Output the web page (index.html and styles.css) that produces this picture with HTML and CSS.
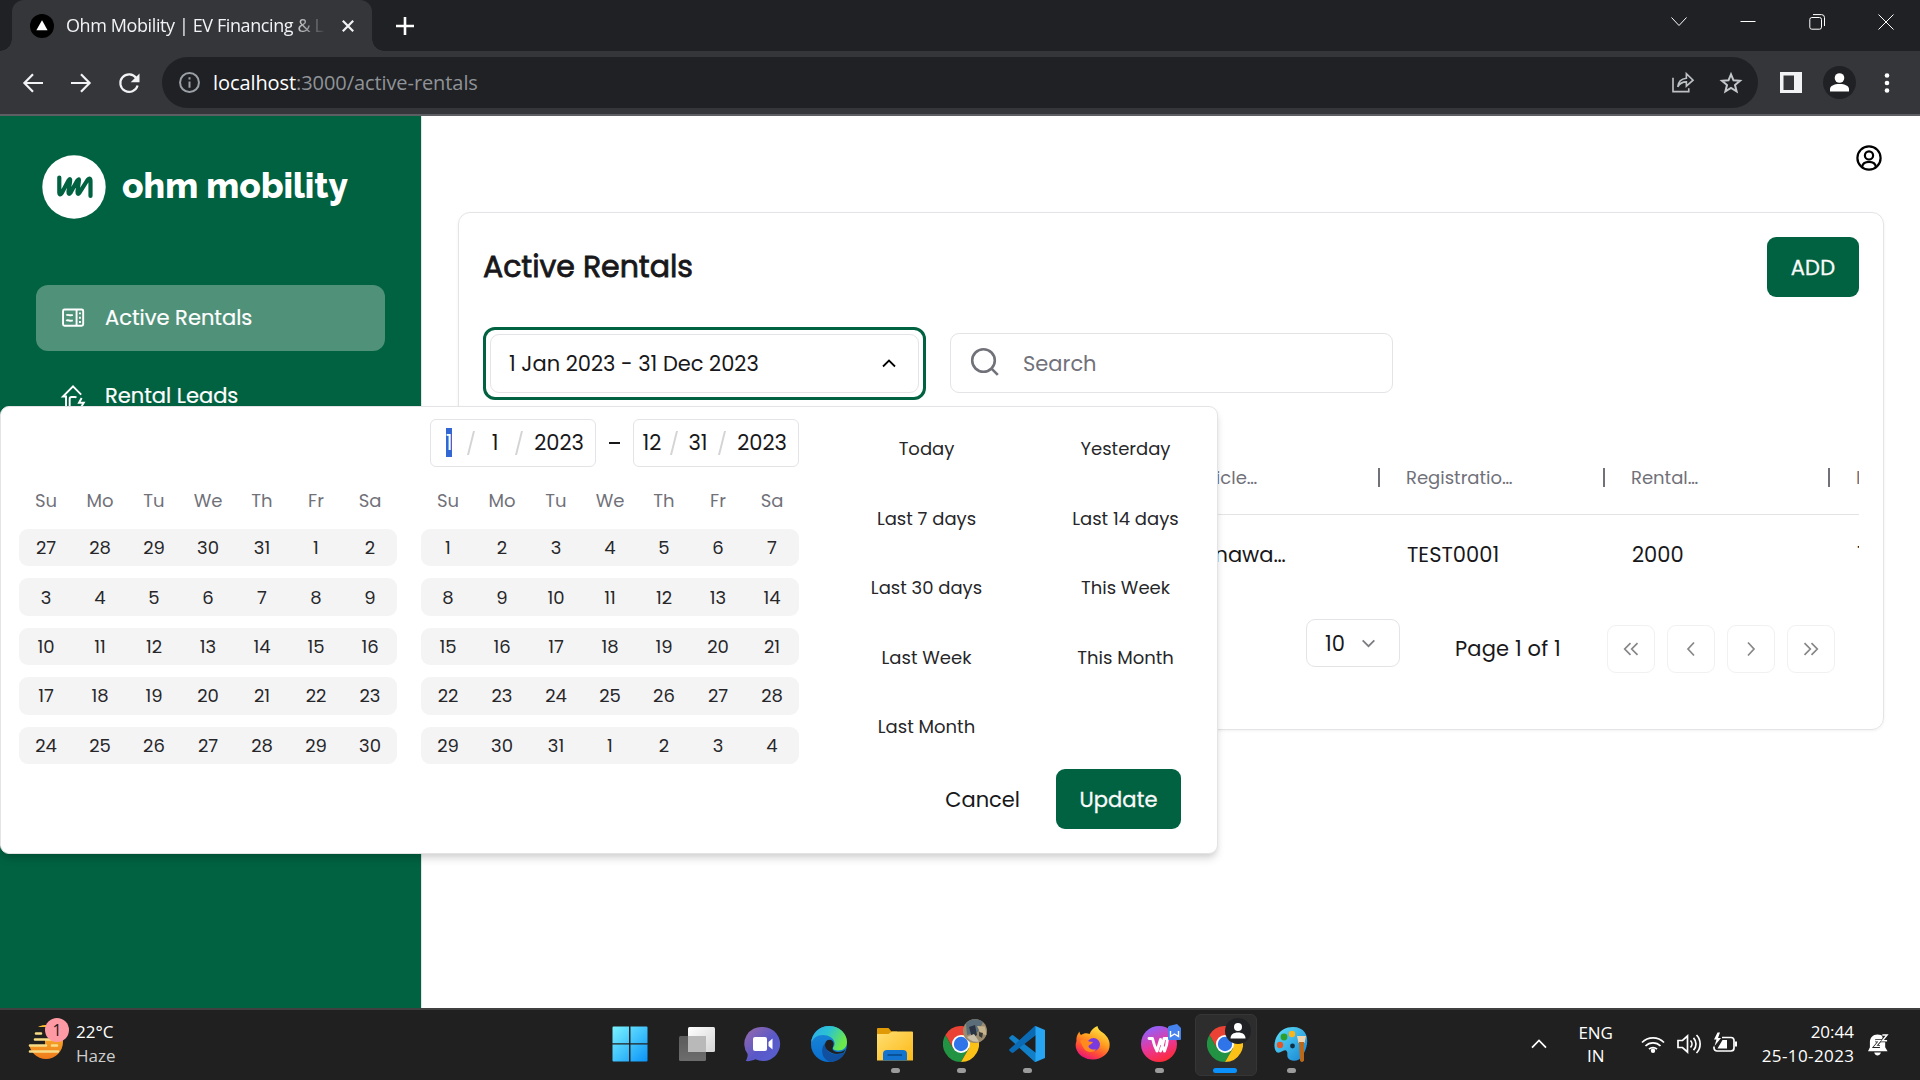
FILE: index.html
```html
<!DOCTYPE html>
<html lang="en">
<head>
<meta charset="utf-8">
<title>Ohm Mobility | EV Financing &amp; Leasing</title>
<link rel="stylesheet" href="styles.css">
</head>
<body>
<svg class="defs" width="0" height="0">
  <defs>
    <linearGradient id="win" x1="0" y1="0" x2="1" y2="1"><stop offset="0" stop-color="#7af3ff"/><stop offset="1" stop-color="#0a94f8"/></linearGradient>
    <linearGradient id="tvF" x1="0" y1="0" x2="1" y2="1"><stop offset="0" stop-color="#fff"/><stop offset="1" stop-color="#d4d4d4"/></linearGradient>
    <linearGradient id="tvB" x1="0" y1="0" x2="0" y2="1"><stop offset="0" stop-color="#5b5b5b"/><stop offset="1" stop-color="#6d6d6d"/></linearGradient>
    <linearGradient id="chat" x1="0" y1="0" x2="1" y2="1"><stop offset="0" stop-color="#9a6aa8"/><stop offset=".55" stop-color="#5a58c8"/><stop offset="1" stop-color="#5660d0"/></linearGradient>
    <linearGradient id="edgeA" x1="0" y1="0" x2="1" y2=".4"><stop offset="0" stop-color="#2fa9ee"/><stop offset=".5" stop-color="#2bc3d2"/><stop offset="1" stop-color="#6be84b"/></linearGradient>
    <linearGradient id="edgeB" x1="0" y1="0" x2="0" y2="1"><stop offset="0" stop-color="#1b8ad8"/><stop offset="1" stop-color="#0a6fd0"/></linearGradient>
    <linearGradient id="fold" x1="0" y1="0" x2="1" y2="1"><stop offset="0" stop-color="#ffdf73"/><stop offset="1" stop-color="#fdb916"/></linearGradient>
    <linearGradient id="ff" x1=".8" y1="0" x2=".3" y2="1"><stop offset="0" stop-color="#fff04a"/><stop offset=".45" stop-color="#ff9a1f"/><stop offset=".75" stop-color="#ff4a37"/><stop offset="1" stop-color="#e8127f"/></linearGradient>
    <linearGradient id="wps" x1=".3" y1="0" x2=".7" y2="1"><stop offset="0" stop-color="#8b63ff"/><stop offset=".5" stop-color="#e6389f"/><stop offset="1" stop-color="#ff2a2f"/></linearGradient>
    <linearGradient id="pal" x1="0" y1="0" x2="1" y2="1"><stop offset="0" stop-color="#5fe0fb"/><stop offset="1" stop-color="#1583d3"/></linearGradient>
    <linearGradient id="sun" x1="0" y1="0" x2="0" y2="1"><stop offset="0" stop-color="#fbc02e"/><stop offset="1" stop-color="#ee7a1c"/></linearGradient>
    <symbol id="chrome" viewBox="0 0 36 36">
      <path d="M2.4 9A18 18 0 0 1 33.6 9H18L10.2 22.5z" fill="#ea4335"/>
      <path d="M2.4 9A18 18 0 0 0 18 36L25.8 22.5H10.2z" fill="#229342"/>
      <path d="M33.6 9A18 18 0 0 1 18 36L25.8 22.5 18 9z" fill="#fbc116"/>
      <circle cx="18" cy="18" r="9" fill="#fff"/><circle cx="18" cy="18" r="7.2" fill="#2f74e8"/>
    </symbol>
  </defs>
</svg>

<header class="browser">
  <div class="tabstrip">
    <div class="tab">
      <svg class="favicon" viewBox="0 0 24 24"><circle cx="12" cy="12" r="12"/><path d="M12 6.3l5.600 10H6.400z" fill="#fff"/></svg>
      <span class="tab-title">Ohm Mobility | EV Financing &amp; L</span>
      <svg class="tab-close" viewBox="0 0 12 12"><path d="M.8.8l10.400 10.400M11.200.8L.8 11.200"/></svg>
    </div>
    <svg class="newtab" viewBox="0 0 18 18"><path d="M9 0v18M0 9h18"/></svg>
    <div class="win-controls">
      <svg viewBox="0 0 16 16"><path d="M.5 3.500L8 11.500 15.500 3.500"/></svg>
      <svg viewBox="0 0 16 16"><path d="M.5 7.500h15"/></svg>
      <svg viewBox="0 0 16 16"><rect x=".8" y="3.500" width="11.700" height="11.700" rx="2"/><path d="M4 .6h8.500a3 3 0 0 1 3 3V12"/></svg>
      <svg viewBox="0 0 16 16"><path d="M.5.5l15 15M15.500.5l-15 15"/></svg>
    </div>
  </div>
  <div class="toolbar">
    <svg class="tb-ico back" viewBox="0 0 20 20"><path d="M20 10H1.500M10 1.200L1.400 10l8.600 8.800"/></svg>
    <svg class="tb-ico fwd" viewBox="0 0 20 20"><path d="M0 10h18.500M10 1.200L18.600 10 10 18.800"/></svg>
    <svg class="tb-ico reload" viewBox="0 0 20 20"><path d="M17.300 5A8.800 8.800 0 1 0 18.600 12.500"/><path d="M20.500.5v8.800h-8.800z" fill="#f1f3f4" stroke="none"/></svg>
    <div class="omnibox">
      <svg class="info" viewBox="0 0 20 20"><circle cx="10" cy="10" r="9"/><path d="M10 9v6M10 5v2.200"/></svg>
      <span class="url"><b>localhost</b>:3000/active-rentals</span>
      <svg class="share" viewBox="0 0 24 22"><path d="M1 6v14.500h16.500V17M6 15.500C6.500 10 10 7 15 6.500V1.800l7 6.700-7 6.300v-4.500c-4 0-7 1.500-9 5.200z"/></svg>
      <svg class="star" viewBox="0 0 22 22"><path d="M11 2.300l2.500 6 6.500.5-5 4.200 1.600 6.300L11 15.900l-5.600 3.400L7 13 2 8.800l6.500-.5z"/></svg>
    </div>
    <svg class="panel-ico" viewBox="0 0 22 21"><path fill-rule="evenodd" fill="#f1f3f4" d="M0 0h22v21H0zM3.500 3.500v14.500H14V3.500z"/></svg>
    <svg class="profile" viewBox="0 0 33 33"><circle cx="16.500" cy="16.500" r="16.500" fill="#202124"/><circle cx="16.500" cy="12" r="4.800" fill="#fff"/><path d="M7 25.500v-2.500c0-3 4-5 9.500-5s9.500 2 9.500 5v2.500z" fill="#fff"/></svg>
    <svg class="kebab" viewBox="0 0 6 20"><circle cx="3" cy="2.500" r="2.300"/><circle cx="3" cy="10" r="2.300"/><circle cx="3" cy="17.500" r="2.300"/></svg>
  </div>
</header>

<div class="app">
  <aside class="sidebar">
    <div class="brand">
      <svg viewBox="0 0 64 64"><circle cx="32" cy="32" r="31.700" fill="#fff"/><path d="M17.300 22.500V37.500q.3 3.500 2.500.5L26.500 25.500q2.300-3 1.600 1L26.500 36.500q-.2 4 2 1.200L35 26q2.500-3.500 1.800.5L35.500 36.500q-.2 4 2 1.200L45.500 25q3-3 3 1v15" fill="none" stroke="#006241" stroke-width="4.200" stroke-linecap="round" stroke-linejoin="round"/></svg>
      <span class="brand-name">ohm mobility</span>
    </div>
    <nav class="nav">
      <a class="nav-item active">
        <svg viewBox="0 0 24 20"><rect x="1.100" y="1.100" width="21" height="17" rx="1.500"/><path d="M15.200 1v17M4.500 7.300c2-1.800 3.500 1 6.800-.5M4.500 13c2-1.800 3.500 1 6.800-.5"/><path d="M18.700 4.200v2M18.700 8.700v2M18.700 13.200v2"/></svg>
        <span>Active Rentals</span>
      </a>
      <a class="nav-item">
        <svg class="house" viewBox="0 0 24 24"><path d="M20 10.500L11.500 2 1 12.500h3.200V22a2 2 0 0 0 2 2h6M8 23v-8a2 2 0 0 1 2-2h3.500a2 2 0 0 1 1.500.7M20.500 14l-2.800 5h5L20 23.500"/></svg>
        <span>Rental Leads</span>
      </a>
    </nav>
  </aside>

  <main class="main">
    <div class="topbar">
      <svg viewBox="0 0 26 26"><circle cx="13" cy="13" r="11.600"/><circle cx="13" cy="10.400" r="4.100"/><path d="M6 22c.6-4 3-5.200 7-5.200s6.400 1.200 7 5.200"/></svg>
    </div>
    <section class="card">
      <div class="card-head">
        <h1>Active Rentals</h1>
        <button class="btn-primary add">ADD</button>
      </div>
      <div class="filters">
        <div class="date-select">
          <span>1 Jan 2023 - 31 Dec 2023</span>
          <svg viewBox="0 0 14 9"><path d="M1 7.500L7 1.500l6 6"/></svg>
        </div>
        <div class="search">
          <svg viewBox="0 0 30 30"><circle cx="13.500" cy="13.500" r="11.300"/><path d="M21.800 21.800l6 6"/></svg>
          <span>Search</span>
        </div>
      </div>
      <div class="table">
        <div class="tr th">
          <div></div><div></div><div></div>
          <div><span>Vehicle…</span></div>
          <div><span>Registratio…</span></div>
          <div><span>Rental…</span></div>
          <div><span>I</span></div>
        </div>
        <div class="tr td">
          <div></div><div></div><div></div>
          <div>Okinawa…</div>
          <div>TEST0001</div>
          <div>2000</div>
          <div>1</div>
        </div>
      </div>
      <div class="pager">
        <div class="page-size"><span>10</span><svg viewBox="0 0 16 10"><path d="M1.500 1.500L8 8l6.500-6.500"/></svg></div>
        <span class="page-of">Page 1 of 1</span>
        <div class="pg"><svg viewBox="0 0 18 18"><path d="M8.500 3.200L2.700 9l5.800 5.800M15.500 3.200L9.700 9l5.800 5.800"/></svg></div>
        <div class="pg"><svg viewBox="0 0 18 18"><path d="M12 2.500L6 9l6 6.500"/></svg></div>
        <div class="pg"><svg viewBox="0 0 18 18"><path d="M6 2.500L12 9l-6 6.500"/></svg></div>
        <div class="pg"><svg viewBox="0 0 18 18"><path d="M2.500 3.200L8.300 9l-5.800 5.800M9.500 3.200L15.300 9l-5.800 5.800"/></svg></div>
      </div>
    </section>
  </main>

  <div class="popover">
    <div class="cal-side">
      <div class="date-inputs">
        <div class="date-box"><span class="mm"><mark>1</mark></span><i></i><span class="dd">1</span><i></i><span class="yy">2023</span></div>
        <span class="dash"></span>
        <div class="date-box"><span class="mm">12</span><i></i><span class="dd">31</span><i></i><span class="yy">2023</span></div>
      </div>
      <div class="calendars">
        <div class="cal">
          <div class="week head"><span>Su</span><span>Mo</span><span>Tu</span><span>We</span><span>Th</span><span>Fr</span><span>Sa</span></div>
          <div class="week"><span>27</span><span>28</span><span>29</span><span>30</span><span>31</span><span>1</span><span>2</span></div>
          <div class="week"><span>3</span><span>4</span><span>5</span><span>6</span><span>7</span><span>8</span><span>9</span></div>
          <div class="week"><span>10</span><span>11</span><span>12</span><span>13</span><span>14</span><span>15</span><span>16</span></div>
          <div class="week"><span>17</span><span>18</span><span>19</span><span>20</span><span>21</span><span>22</span><span>23</span></div>
          <div class="week"><span>24</span><span>25</span><span>26</span><span>27</span><span>28</span><span>29</span><span>30</span></div>
        </div>
        <div class="cal">
          <div class="week head"><span>Su</span><span>Mo</span><span>Tu</span><span>We</span><span>Th</span><span>Fr</span><span>Sa</span></div>
          <div class="week"><span>1</span><span>2</span><span>3</span><span>4</span><span>5</span><span>6</span><span>7</span></div>
          <div class="week"><span>8</span><span>9</span><span>10</span><span>11</span><span>12</span><span>13</span><span>14</span></div>
          <div class="week"><span>15</span><span>16</span><span>17</span><span>18</span><span>19</span><span>20</span><span>21</span></div>
          <div class="week"><span>22</span><span>23</span><span>24</span><span>25</span><span>26</span><span>27</span><span>28</span></div>
          <div class="week"><span>29</span><span>30</span><span>31</span><span>1</span><span>2</span><span>3</span><span>4</span></div>
        </div>
      </div>
    </div>
    <div class="preset-side">
      <div class="presets">
        <span>Today</span><span>Yesterday</span>
        <span>Last 7 days</span><span>Last 14 days</span>
        <span>Last 30 days</span><span>This Week</span>
        <span>Last Week</span><span>This Month</span>
        <span>Last Month</span>
      </div>
      <div class="actions">
        <button class="btn-ghost">Cancel</button>
        <button class="btn-primary update">Update</button>
      </div>
    </div>
  </div>
</div>

<footer class="taskbar">
  <div class="weather">
    <div class="w-ico">
      <svg viewBox="0 0 36 36"><circle cx="18" cy="15" r="17" fill="url(#sun)"/><path d="M0 0h36v12H17v6H0z" fill="#202020"/><path d="M8 6.500h5M7 12.500h16M2 18.500h16M24 18.500h5M2 24.500h28" stroke="#f7dc87" stroke-width="2.600" stroke-linecap="round"/></svg>
      <span class="badge">1</span>
    </div>
    <div class="w-text"><span>22°C</span><span class="dim">Haze</span></div>
  </div>
  <div class="tasks">
    <div class="task start"><svg viewBox="0 0 36 36"><path fill="url(#win)" d="M1.500.5H17v16.700H.5V1.500a1 1 0 0 1 1-1zM18.500.5h16a1 1 0 0 1 1 1v15.700h-17zM.5 18.500H17v17H1.500a1 1 0 0 1-1-1zM18.500 18.500h17v16a1 1 0 0 1-1 1h-16z"/></svg></div>
    <div class="task"><svg viewBox="0 0 36 36"><rect x="9" y="1" width="27" height="25" rx="1.500" fill="url(#tvF)"/><rect x="0" y="10" width="27" height="25" rx="1.500" fill="url(#tvB)"/><path d="M9 10h18v16H9z" fill="#b9b9b9"/></svg></div>
    <div class="task"><svg viewBox="0 0 36 36"><path fill="url(#chat)" d="M18 1a17 17 0 1 1-7.500 32.200C7.500 34.500 4 35.500.8 35c1.200-2 2-4.500 1.800-7A17 17 0 0 1 18 1z"/><rect x="8" y="11" width="14" height="14" rx="2" fill="#fff"/><path d="M23.500 16l4-3.500v11l-4-3.500z" fill="#fff"/></svg></div>
    <div class="task"><svg viewBox="0 0 36 36"><circle cx="18" cy="18" r="18" fill="url(#edgeB)"/><path d="M0 17C1 7 8.500 0 18 0c10.500 0 18 7.500 18 16 0 5-3.500 8.500-8.500 8.500-4 0-6-1.500-5.500-2.800 1.500-2 2-3.800 1.300-6C22 12 18 9 12 9 6 9 2 12 0 17z" fill="url(#edgeA)"/><path d="M14 17c-5 6-3.500 16 5 18.900C25.500 36 31 32.500 33.500 27.500c.3-.8-.3-1-1-.6-6 2.600-12.500 1.500-16-2.500-2-2.300-3-4.500-2.500-7.400z" fill="#10509e"/><path d="M14 18.500c.3-3 2.200-5 5-4.800 3 .2 4.800 3.500 2.800 7.500-1.500 3 2 4.800 6 4.800 3.500 0 6.500-1.600 8-4.500l-3 5c-6.500 2.600-12 1.500-15.600-1.700-2-1.800-3.500-3.700-3.200-6.300z" fill="#202020"/></svg></div>
    <div class="task run"><svg viewBox="0 0 36 36"><path d="M0 3a1 1 0 0 1 1-1h10.500l3 3.500H20V12H0z" fill="#e09a05"/><path d="M0 8h11.500L15 5.500h20a1 1 0 0 1 1 1v28H0z" fill="url(#fold)"/><path d="M6 34.500V28a4 4 0 0 1 4-4h16a4 4 0 0 1 4 4v6.500z" fill="#1274cf"/><path d="M10.500 29h14.500" stroke="#0a4f92" stroke-width="1.800"/></svg></div>
    <div class="task run"><svg viewBox="0 0 36 36"><use href="#chrome"/></svg>
      <svg class="overlay photo" viewBox="0 0 24 24"><circle cx="12" cy="12" r="12" fill="#9a8a70"/><path d="M3 4.500A12 12 0 0 1 20 3L15 13 4 16z" fill="#5a6d78"/><path d="M6 8l6-2 2 10-5 3z" fill="#2a3344"/><path d="M14 7l8 .5L23.500 16 18 15z" fill="#c8b48c"/><path d="M4 18l7-3 5 7.500A12 12 0 0 1 4 18z" fill="#c9bea8"/><path d="M16 13l4 1-1 5-3-2z" fill="#3c3a38"/></svg></div>
    <div class="task run"><svg viewBox="0 0 36 36"><path d="M4.500 9.500L27 27v9h-1.200L.5 12.800a1 1 0 0 1 0-1.500l2-1.800a1.500 1.500 0 0 1 2 0z" fill="#1180c8"/><path d="M4.500 26.500L27 9V0h-1.200L.5 23.200a1 1 0 0 0 0 1.500l2 1.800a1.500 1.500 0 0 0 2 0z" fill="#0a6ab4"/><path d="M26.500 0L36 4v28l-9.500 4z" fill="#27a5f2"/></svg></div>
    <div class="task"><svg viewBox="0 0 36 36"><path d="M1.500 15C1 10.500 3 7.500 4.500 5.500c0 1.500.5 2.500 1.500 3.500C9 7 12 7 14.500 8c1.500-4 4.500-6.500 8-8 .5 4 4 5.500 7 8 3 3 6 7 5 13a17 14.500 0 0 1-33.500 1c-.5-2-.5-5 .5-7z" fill="url(#ff)"/><circle cx="18.500" cy="18.500" r="6.500" fill="#7a3ae0"/><path d="M5 15c3-3 6-2 9 .5l4 .5c-1 2-3.500 2.500-4.500 4 0 3 5 4.500 8 3-3 4-10 4-13-1-1-2-2-4-3.500-7z" fill="#ff8a1e"/></svg></div>
    <div class="task run"><svg viewBox="0 0 36 36"><circle cx="18" cy="18" r="18" fill="url(#wps)"/><path d="M8 12.500h3.500c1 4.500 2.500 9 4.500 12.500l3.500-11.500c1.200 4.500 2.300 8 4 11.500 1.500-3 2.800-8 3-12.500h-3.500c-.8 4-1.500 8-3.500 12.500" fill="none" stroke="#fff" stroke-width="2.900" stroke-linejoin="round" stroke-linecap="round"/></svg>
      <svg class="overlay doc" viewBox="0 0 13 16"><path d="M1 2l8-2 4 4v11a1 1 0 0 1-1 1H1a1 1 0 0 1-1-1V3z" fill="#4682ee"/><path d="M2.500 7v5.500l4-2.500 4 2.500V7" fill="none" stroke="#fff" stroke-width="1.400"/></svg></div>
    <div class="task run current"><svg viewBox="0 0 36 36"><use href="#chrome"/></svg>
      <svg class="overlay person" viewBox="0 0 26 26"><circle cx="13" cy="13" r="13" fill="#202124"/><circle cx="13" cy="9" r="4" fill="#fff"/><path d="M5.500 20.500c0-4 3-6 7.500-6s7.500 2 7.500 6z" fill="#fff"/></svg></div>
    <div class="task run"><svg viewBox="0 0 36 36"><path d="M20 1C31 1 35.500 9 34 18c-1 7-5 13-8 15.500-4 2-9 1.500-11-1.500-1.500-3 .5-6-2-7.500C10 23 7 28.500 3.500 26 .5 22.500 1 15.500 4 10 7.500 4 13 1 20 1z" fill="url(#pal)"/><circle cx="7" cy="19" r="3.200" fill="#e4552a"/><circle cx="11" cy="11" r="3.400" fill="#2e9e2b"/><circle cx="19" cy="8" r="3.200" fill="#f9b51a"/><circle cx="19.500" cy="20" r="2.400" fill="#103044"/><path d="M24 10h9l-1.500 7h-6z" fill="#f0d6b0"/><path d="M26 16h5v17a2 2 0 0 1-4 1.500z" fill="#b8691b"/></svg></div>
  </div>
  <div class="tray">
    <svg class="t-chev" viewBox="0 0 16 10"><path d="M1 8.700L8 1.500l7 7.200"/></svg>
    <div class="lang"><span>ENG</span><span>IN</span></div>
    <svg class="wifi" viewBox="0 0 24 18"><path d="M1 7.500a15.500 15.500 0 0 1 22 0M4.500 11a10.500 10.500 0 0 1 15 0M8 14.200a5.700 5.700 0 0 1 8 0"/><circle cx="12" cy="15.800" r="2.200" fill="#fff" stroke="none"/></svg>
    <svg class="vol" viewBox="0 0 24 20"><path d="M1 6.500h4.500L10.500 2v16l-5-4.500H1zM13.500 6.500a5 5 0 0 1 0 7M16.500 3.800a9 9 0 0 1 0 12.400M19.500 1a13 13 0 0 1 0 18"/></svg>
    <svg class="bat" viewBox="0 0 24 20"><path d="M9 3.500H18a3 3 0 0 1 3 3v7.500a3 3 0 0 1-3 3H4a3 3 0 0 1-3-3v-1.500"/><path d="M4.500 14.500L9.500 6H14v8.500zM22 7.500h2v5h-2z" fill="#fff" stroke="none"/><path d="M4.500-1.500L1 5.500h2.500L1.500 12 8 4H5l2-5.500z" fill="#fff" stroke="none"/></svg>
    <div class="clock"><span>20:44</span><span class="date">25-10-2023</span></div>
    <svg class="bell" viewBox="0 0 22 24"><path d="M10 1.500c5 0 8 3.500 8 8V15l2.500 4H0L2 15V9.500c0-4.500 3-8 8-8zM6.500 20.500h7c-.5 2-2 3-3.500 3s-3-1-3.500-3z" fill="#fff"/><path d="M7.500 8h5l-5 6h5M15 3h4l-4 5h4" fill="none" stroke="#202020" stroke-width="3.200"/><path d="M7.500 8h5l-5 6h5M15 2h5l-5 6h5" fill="none" stroke="#fff" stroke-width="1.500"/></svg>
  </div>
</footer>
</body>
</html>
```
FILE: styles.css
```css
* { box-sizing: border-box; }
body {
  margin: 0;
  width: 1920px;
  height: 1080px;
  overflow: hidden;
  display: flex;
  flex-direction: column;
  font-family: Poppins, Inter, "Open Sans", sans-serif;
  font-size: 21px;
  color: #18181b;
  background: #fff;
}
svg { flex: none; display: block; overflow: visible; }
.defs { position: absolute; }
button { font: inherit; color: inherit; border: 0; padding: 0; margin: 0; }

/* browser frame */
.browser { height: 116px; flex: none; background: #35363a; border-bottom: 2px solid #5d5e61; font-family: "Segoe UI", "Open Sans", sans-serif; }
.tabstrip { height: 51px; background: #202124; display: flex; align-items: center; padding-left: 12px; }
.tab { position: relative; width: 360px; height: 51px; padding: 0 18px; background: #35363a; border-radius: 12px 12px 0 0; display: flex; align-items: center; }
.tab::before, .tab::after { content: ""; position: absolute; bottom: 0; width: 12px; height: 12px; }
.tab::before { left: -12px; background: radial-gradient(circle at 0 0, #202124 11.5px, #35363a 12px); }
.tab::after { right: -12px; background: radial-gradient(circle at 100% 0, #202124 11.5px, #35363a 12px); }
.favicon { width: 24px; height: 24px; }
.tab-title { margin-left: 12px; width: 260px; white-space: nowrap; font-size: 18px; letter-spacing: -.4px; margin-top: -1px; color: #f1f3f4; -webkit-mask-image: linear-gradient(90deg, #000 225px, transparent 260px); mask-image: linear-gradient(90deg, #000 225px, transparent 260px); }
.tab-close { margin-left: 16px; width: 12px; height: 12px; fill: none; stroke: #f1f3f4; stroke-width: 2.2; }
.newtab { margin-left: 24px; width: 18px; height: 18px; stroke: #fff; stroke-width: 2.6; }
.win-controls { margin-left: auto; display: flex; gap: 53px; padding-right: 26.5px; margin-top: -8px; }
.win-controls svg { width: 16px; height: 16px; fill: none; stroke: #fff; stroke-width: 1; }
.toolbar { height: 63px; display: flex; align-items: center; padding-left: 23px; }
.tb-ico { width: 20px; height: 20px; fill: none; stroke: #f1f3f4; stroke-width: 2.2; }
.fwd, .reload { margin-left: 28px; }
.omnibox { margin-left: 23px; width: 1596px; height: 51px; border-radius: 26px; background: #202124; display: flex; align-items: center; padding: 0 16px 0 17px; }
.info { width: 21px; height: 21px; fill: none; stroke: #9aa0a6; stroke-width: 1.9; }
.url { margin-left: 13px; font-size: 20px; letter-spacing: -.08px; color: #8f9398; margin-top: -1px; }
.url b { font-weight: 400; color: #fff; }
.share { margin-left: auto; width: 23px; height: 21px; fill: none; stroke: #bdc1c6; stroke-width: 1.7; }
.star { margin-left: 25px; width: 22px; height: 22px; fill: none; stroke: #c4c7cb; stroke-width: 2; }
.panel-ico { margin-left: 22px; width: 22px; height: 21px; }
.profile { margin-left: 21px; width: 33px; height: 33px; }
.kebab { margin-left: 28px; width: 6px; height: 20px; fill: #fff; }

/* page */
.app { position: relative; height: 892px; flex: none; display: flex; }
.sidebar { width: 421px; background: #006241; color: #fff; padding: 39px 36px 0; flex: none; }
.brand { display: flex; align-items: center; gap: 16px; padding-left: 6px; height: 64px; }
.brand svg { width: 64px; height: 64px; }
.brand-name { font-family: Raleway, Lato, sans-serif; font-weight: 800; font-size: 35.3px; white-space: nowrap; line-height: 40px; margin-top: -2px; }
.nav { margin-top: 66px; display: flex; flex-direction: column; gap: 12px; }
.nav-item { height: 66px; border-radius: 12px; display: flex; align-items: center; gap: 20px; padding-left: 26px; white-space: nowrap; }
.nav-item.active { background: #4f9179; }
.nav-item span { margin-top: -1px; -webkit-text-stroke: .2px #fff; }
.nav-item svg { width: 23px; height: 20px; fill: none; stroke: #fff; stroke-width: 2; }
.nav-item svg.house { height: 24px; }

.main { flex: 1; border-left: 1px solid #e4e4e7; padding: 29px 36px 0; }
.topbar { height: 67px; display: flex; justify-content: flex-end; padding-right: 2px; }
.topbar svg { width: 26px; height: 26px; fill: none; stroke: #000; stroke-width: 2.2; }
.card { width: 1426px; height: 518px; border: 1px solid #e4e4e7; border-radius: 12px; padding: 24px; box-shadow: 0 1px 3px rgba(0,0,0,.06); }
.card-head { display: flex; justify-content: space-between; align-items: center; height: 60px; }
h1 { margin: 0; font-size: 30px; font-weight: 400; -webkit-text-stroke: .8px #18181b; letter-spacing: -.04px; }
.btn-primary { background: #006241; color: #fafafa; border-radius: 9px; height: 60px; -webkit-text-stroke: .3px #fafafa; }
.add { width: 92px; letter-spacing: .3px; }
.filters { display: flex; margin-top: 30px; height: 73px; align-items: center; gap: 24px; }
.date-select { width: 443px; height: 73px; border: 3px solid #006241; border-radius: 12px; position: relative; display: flex; align-items: center; justify-content: space-between; padding: 0 27px 0 23px; }
.date-select::before { content: ""; position: absolute; inset: 4px; border: 1px solid #e4e4e7; border-radius: 9px; }
.date-select svg { width: 14px; height: 9px; fill: none; stroke: #000; stroke-width: 1.8; }
.search { width: 443px; height: 60px; margin-top: -1px; border: 1px solid #e4e4e7; border-radius: 9px; display: flex; align-items: center; padding-left: 19px; color: #71717a; }
.search svg { width: 30px; height: 30px; fill: none; stroke: #71717a; stroke-width: 2.6; margin-top: -3px; }
.search span { margin-left: 23px; }

.table { margin-top: 42px; width: 1376px; overflow: hidden; }
.tr { display: grid; grid-template-columns: repeat(7, 225px); width: 1575px; }
.tr > div { padding-left: 23px; display: flex; align-items: center; white-space: nowrap; }
.th { height: 73px; border-bottom: 1px solid #e4e4e7; color: #71717a; font-size: 18px; }
.th > div { position: relative; padding-bottom: 2px; }
.th > div::after { content: ""; position: absolute; right: 3px; top: 26px; width: 2px; height: 19px; background: #71717a; }
.td { height: 79px; }
.td > div { padding-left: 24px; }

.pager { display: flex; align-items: flex-end; height: 60px; margin-top: 19px; padding-left: 823px; }
.page-size { width: 94px; height: 48px; margin-bottom: 6px; border: 1px solid #e4e4e7; border-radius: 9px; display: flex; align-items: center; padding: 0 23px 0 18px; justify-content: space-between; }
.page-size svg { width: 15px; height: 9px; fill: none; stroke: #7c7c80; stroke-width: 1.9; }
.page-of { width: 207px; padding-left: 55px; line-height: 48px; white-space: nowrap; letter-spacing: .15px; }
.pg { width: 48px; height: 48px; margin-right: 12px; border: 1px solid #f1f1f2; border-radius: 9px; display: flex; align-items: center; justify-content: center; }
.pg svg { width: 18px; height: 18px; fill: none; stroke: #868689; stroke-width: 1.7; }

/* date range popover */
.popover { position: absolute; left: 0; top: 290px; width: 1218px; height: 448px; background: #fff; border: 1px solid #e4e4e7; border-radius: 9px; box-shadow: 0 6px 9px -1px rgba(0,0,0,.12), 0 3px 6px -2px rgba(0,0,0,.1); display: flex; }
.cal-side { width: 780px; margin-left: 18px; padding-top: 12px; }
.date-inputs { display: flex; justify-content: flex-end; align-items: center; }
.date-box { width: 166px; height: 48px; border: 1px solid #e4e4e7; border-radius: 6px; display: flex; align-items: center; text-align: center; }
.date-box span { margin-top: -1px; }
.date-box .mm { width: 36px; }
.date-box .dd { width: 40px; }
.date-box .yy { width: 72px; }
.date-box mark { background: #3367d1; color: #fff; }
.date-box i { width: 2px; height: 24px; margin: 0 3px; background: #d4d4d4; transform: skewX(-14deg); }
.dash { width: 11px; height: 2px; background: #18181b; margin: 0 13px; }
.calendars { display: flex; gap: 24px; margin-top: 16px; }
.cal { width: 378px; display: flex; flex-direction: column; gap: 12px; }
.week { display: grid; grid-template-columns: repeat(7, 54px); height: 37.4px; background: #f4f4f5; border-radius: 9px; align-items: center; text-align: center; font-size: 18px; color: #27272a; }
.week.head { background: none; height: 34px; padding-top: 1px; color: #71717a; }
.preset-side { flex: 1; padding-left: 28px; }
.presets { display: grid; grid-template-columns: 199px 199px; grid-auto-rows: 69.6px; padding-top: 7px; height: 356px; text-align: center; line-height: 69.6px; font-size: 18px; color: #27272a; }
.actions { display: flex; justify-content: flex-end; align-items: center; padding-right: 36px; width: 390px; margin-top: 6px; }
.btn-ghost { background: none; margin-right: 36px; }
.update { width: 125px; letter-spacing: .1px; }

/* desktop taskbar */
.taskbar { height: 72px; flex: none; background: #202020; border-top: 2px solid #404040; display: grid; grid-template-columns: 598px 726px 1fr; color: #fff; font-family: "Segoe UI", "Open Sans", sans-serif; font-size: 17px; }
.weather { display: flex; padding-left: 28px; align-items: center; }
.w-ico { position: relative; width: 36px; height: 36px; }
.w-ico svg { width: 36px; height: 36px; }
.badge { position: absolute; left: 17px; top: -9px; width: 24px; height: 24px; border-radius: 50%; background: #ff99a4; color: #1b1b1b; text-align: center; line-height: 24px; font-size: 16px; }
.w-text { margin: -2px 0 0 12px; display: flex; flex-direction: column; line-height: 24px; }
.dim { color: #cdcdcd; }
.tasks { display: flex; }
.task { position: relative; width: 66px; display: flex; justify-content: center; padding-top: 16px; }
.task.start { padding-right: 3px; }
.task svg { width: 36px; height: 36px; z-index: 1; }
.task.run::after { content: ""; position: absolute; bottom: 7px; left: 29px; width: 9px; height: 5px; border-radius: 3px; background: #9b9b9b; }
.task.current::before { content: ""; position: absolute; left: 3px; top: 4px; width: 60px; height: 60px; border-radius: 6px; background: #2d2d2d; border: 1px solid #363636; }
.task.current::after { left: 21px; width: 24px; background: #0a91fb; }
.task .overlay { position: absolute; }
.task .photo { left: 35px; top: 9px; width: 24px; height: 24px; }
.task .person { left: 33px; top: 8px; width: 26px; height: 26px; }
.task .doc { left: 42px; top: 14px; width: 13px; height: 16px; }
.tray { display: flex; align-items: center; padding: 0 31px 2px 0; justify-content: flex-end; }
.tray svg { fill: none; stroke: #fff; stroke-width: 1.7; }
.t-chev { width: 16px; height: 10px; }
.lang { margin-left: 31px; width: 36px; display: flex; flex-direction: column; align-items: center; line-height: 23px; }
.wifi { margin-left: 27px; width: 24px; height: 18px; }
.vol { margin-left: 12px; width: 24px; height: 20px; }
.bat { margin-left: 12px; width: 24px; height: 20px; }
.clock { margin-left: 25px; display: flex; flex-direction: column; align-items: flex-end; line-height: 24px; }
.date { letter-spacing: .4px; margin-right: -.4px; }
.tray .bell { margin-left: 14px; width: 21px; height: 23px; stroke: none; }
```
